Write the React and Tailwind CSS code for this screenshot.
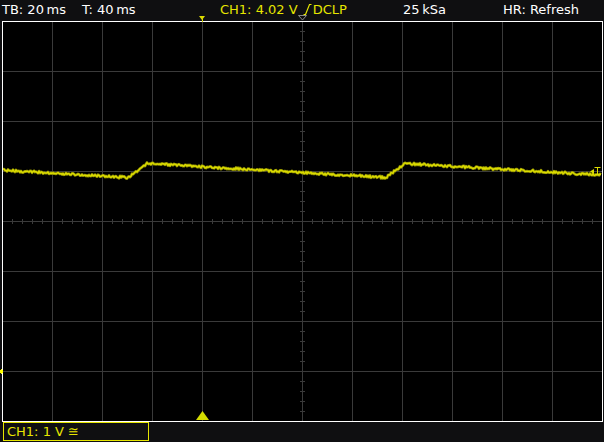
import React from "react";

// Deterministic noise so the trace looks the same on every render
function makeRng(seed) {
  let s = seed >>> 0;
  return () => {
    s = (s * 1664525 + 1013904223) >>> 0;
    return s / 4294967296;
  };
}

// Sawtooth-like trace: slow decay, short rise, period ~258px
function tracePoints() {
  const rng = makeRng(12345);
  const pts = [];
  const top = 163.5;
  const bottom = 177.5;
  const riseLen = 19;
  const period = 258;
  const firstRise = 128;
  for (let x = 3; x <= 601; x += 1) {
    let t = (x - firstRise) % period;
    if (t < 0) t += period;
    let y;
    if (t < riseLen) {
      y = bottom - (bottom - top) * (t / riseLen);
    } else {
      y = top + (bottom - top) * ((t - riseLen) / (period - riseLen));
    }
    const n = (rng() - 0.5) * 2.4;
    pts.push(`${x},${(y + n - 20).toFixed(2)}`);
  }
  return pts.join(" ");
}

function Plot() {
  const vLines = [];
  for (let i = 1; i < 12; i++) vLines.push(2.5 + i * 50);
  const hLines = [];
  for (let i = 1; i < 8; i++) hLines.push(1.5 + i * 50);
  const ticksX = [];
  for (let x = 10; x < 600; x += 10) ticksX.push(x + 2.5);
  const ticksY = [];
  for (let y = 10; y < 400; y += 10) ticksY.push(y + 1.5);
  const pts = tracePoints();
  return (
    <svg width="604" height="402" className="block">
      <rect x="0" y="0" width="604" height="402" fill="#0f0f11" />
      <rect x="2.5" y="1.5" width="600" height="400" fill="#000" />
      {vLines.map((x) => (
        <line key={"v" + x} x1={x} y1="2" x2={x} y2="401" stroke="#3a3a3a" strokeWidth="1" />
      ))}
      {hLines.map((y) => (
        <line key={"h" + y} x1="3" y1={y} x2="602" y2={y} stroke="#3a3a3a" strokeWidth="1" />
      ))}
      {/* minor ticks on the centre axes */}
      {ticksX.map((x) => (
        <line key={"tx" + x} x1={x} y1="199" x2={x} y2="204" stroke="#3a3a3a" strokeWidth="1" />
      ))}
      {ticksY.map((y) => (
        <line key={"ty" + y} x1="300" y1={y} x2="305" y2={y} stroke="#3a3a3a" strokeWidth="1" />
      ))}
      <rect x="2.5" y="1.5" width="600" height="400" fill="none" stroke="#ffffff" strokeWidth="1" />
      {/* trace */}
      <polyline points={pts} fill="none" stroke="#8a8a00" strokeWidth="2.8" strokeLinejoin="round" />
      <polyline points={pts} fill="none" stroke="#dcdc00" strokeWidth="1.4" strokeLinejoin="round" />
      {/* trigger level marker, right edge */}
      <polygon points="590,151.5 594,149 594,154" fill="#dcdc00" />
      <line x1="594.5" y1="147.5" x2="600.5" y2="147.5" stroke="#dcdc00" strokeWidth="1" />
      <line x1="597.5" y1="147.5" x2="597.5" y2="155" stroke="#dcdc00" strokeWidth="1" />
      <line x1="595" y1="154.5" x2="600.5" y2="154.5" stroke="#dcdc00" strokeWidth="1" />
      {/* channel offset marker, left edge */}
      <rect x="0" y="350" width="3" height="3" fill="#ffff00" />
      <rect x="1" y="349" width="1" height="5" fill="#ffff00" />
      {/* trigger position marker, bottom */}
      <polygon points="196,400 202.5,391 209,400" fill="#d4dc00" />
    </svg>
  );
}

function EdgeGlyph() {
  return (
    <svg width="9" height="12" viewBox="0 0 9 12" className="inline-block align-[-1px] mx-[1px]">
      <path d="M0.5 11.5 H2.5 L6.5 1.5 H8.5" fill="none" stroke="#e6e600" strokeWidth="1.2" />
    </svg>
  );
}

export default function App() {
  const font = { fontFamily: '"DejaVu Sans", "Liberation Sans", sans-serif' };
  return (
    <div className="w-[604px] h-[442px] bg-[#0f0f11] flex flex-col overflow-hidden" style={font}>
      <div className="relative h-[20px] flex items-center text-[13px] leading-[20px] text-white whitespace-nowrap">
        <span className="pl-[2px] w-[82px]">TB: 20{"\u2009"}ms</span>
        <span className="w-[138px]">T: 40{"\u2009"}ms</span>
        <span className="w-[183px] text-[#e6e600]">
          CH1: 4.02 V <EdgeGlyph />DCLP
        </span>
        <span className="w-[100px]">25{"\u2009"}kSa</span>
        <span>HR: Refresh</span>
        {/* trigger position and centre markers above the graticule */}
        <svg width="8" height="6" className="absolute left-[199px] top-[16px]">
          <polygon points="0,0 6,0 3,4" fill="#dcdc00" />
          <rect x="3" y="3" width="1" height="3" fill="#dcdc00" />
        </svg>
        <svg width="9" height="6" className="absolute left-[298px] top-[15px]">
          <polygon points="0.5,0.5 8.5,0.5 4.5,5" fill="none" stroke="#8a8a8a" strokeWidth="1" />
        </svg>
      </div>
      <Plot />
      <div className="h-[20px] flex items-start pl-[3px]">
        <div className="w-[146px] h-[19px] border border-[#e6e600] text-[#e6e600] text-[13px] leading-[17px] pl-[3px] whitespace-nowrap">
          CH1: 1 V ≅
        </div>
      </div>
    </div>
  );
}
